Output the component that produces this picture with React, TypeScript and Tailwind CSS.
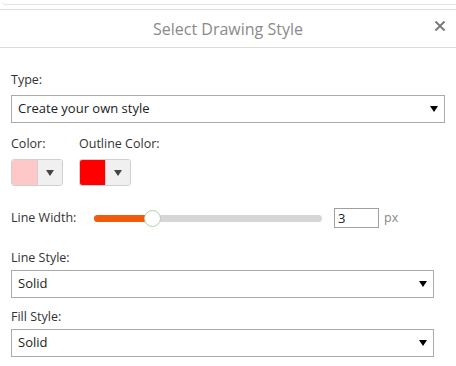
import { useState } from "react";

function Caret({ className = "" }: { className?: string }) {
  return (
    <svg className={className} width="8" height="6" viewBox="0 0 8 6">
      <path d="M0 0h8L4 6z" fill="currentColor" />
    </svg>
  );
}

function SelectBox({ value, width }: { value: string; width: string }) {
  return (
    <div
      className={`flex h-[28px] ${width} items-center justify-between border border-[#ababab] bg-white pl-[6px] pr-[6px] text-[13px] text-[#222]`}
    >
      <span>{value}</span>
      <Caret className="text-black" />
    </div>
  );
}

function ColorPicker({ color }: { color: string }) {
  return (
    <div className="flex h-[27px] w-[52px] overflow-hidden rounded-[3px] border border-[#d0d0d0]">
      <div className="w-[25px]" style={{ background: color }} />
      <div className="flex flex-1 items-center justify-center border-l border-[#d0d0d0] bg-[#f0f0f0]">
        <Caret className="text-[#444]" />
      </div>
    </div>
  );
}

export default function App() {
  const [width] = useState(3);

  return (
    <div className="h-[366px] w-[456px] overflow-hidden bg-white font-['Open_Sans',sans-serif] text-[#333]">
      {/* bit of the panel above */}
      <div className="ml-[2px] h-[5px] rounded-bl-[4px] border-b border-[#e3e3e3]" />
      <div className="mt-[4px] border-t border-[#dcdcdc]">
        {/* Header */}
        <div className="relative flex h-[38px] items-center justify-center border-b border-[#dcdcdc]">
          <span className="text-[16px] text-[#8a8a8a]">Select Drawing Style</span>
          <button className="absolute right-[10px] top-[10px] text-[#777]">
            <svg width="12" height="12" viewBox="0 0 12 12">
              <path d="M1.5 1.5l9 9M10.5 1.5l-9 9" stroke="currentColor" strokeWidth="1.8" />
            </svg>
          </button>
        </div>

        {/* Body */}
        <div className="px-[11px] pt-[23px] text-[12.5px]">
          <div className="leading-[18px]">Type:</div>
          <div className="mt-[6px]">
            <SelectBox value="Create your own style" width="w-[434px]" />
          </div>

          <div className="mt-[12px] flex gap-[16px]">
            <div>
              <div className="leading-[18px]">Color:</div>
              <div className="mt-[6px]">
                <ColorPicker color="#ffc8c8" />
              </div>
            </div>
            <div>
              <div className="leading-[18px]">Outline Color:</div>
              <div className="mt-[6px]">
                <ColorPicker color="#ff0000" />
              </div>
            </div>
          </div>

          <div className="mt-[22px] flex items-center">
            <div className="w-[83px]">Line Width:</div>
            <div className="relative flex h-[18px] w-[228px] items-center">
              <div className="h-[7px] w-full rounded-full bg-[#d6d6d6]" />
              <div className="absolute left-0 h-[7px] w-[58px] rounded-full bg-[#f05a0a]" />
              <div className="absolute left-[50px] h-[17px] w-[17px] rounded-full border border-[#a8d5a8] bg-white" />
            </div>
            <input
              readOnly
              value={width}
              className="ml-[12px] h-[20px] w-[45px] border border-[#a0a0a0] px-[3px] text-[13px] text-[#222] outline-none"
            />
            <span className="ml-[5px] text-[#888]">px</span>
          </div>

          <div className="mt-[21px] leading-[18px]">Line Style:</div>
          <div className="mt-[3px]">
            <SelectBox value="Solid" width="w-[423px]" />
          </div>

          <div className="mt-[10px] leading-[18px]">Fill Style:</div>
          <div className="mt-[3px]">
            <SelectBox value="Solid" width="w-[423px]" />
          </div>
        </div>
      </div>
    </div>
  );
}
